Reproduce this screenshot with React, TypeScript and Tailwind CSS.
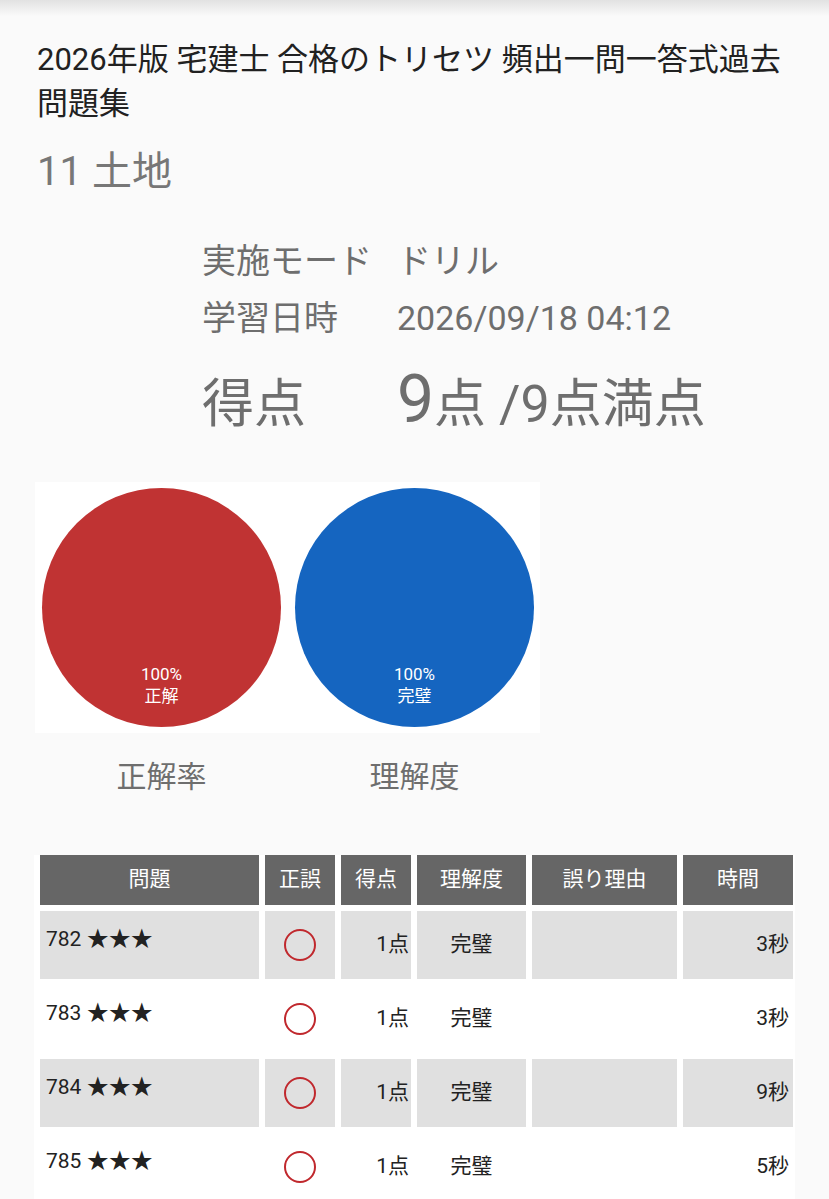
import React from 'react';

const FONT = { fontFamily: 'Roboto, "Noto Sans CJK JP", sans-serif' };

type Row = { id: number; score: string; level: string; reason: string; time: string };

const rows: Row[] = [
  { id: 782, score: '1点', level: '完璧', reason: '', time: '3秒' },
  { id: 783, score: '1点', level: '完璧', reason: '', time: '3秒' },
  { id: 784, score: '1点', level: '完璧', reason: '', time: '9秒' },
  { id: 785, score: '1点', level: '完璧', reason: '', time: '5秒' },
];

const headers = ['問題', '正誤', '得点', '理解度', '誤り理由', '時間'];

function Pie({ color, label }: { color: string; label: string }) {
  return (
    <div className={`w-[239px] h-[239px] rounded-full ${color} flex flex-col items-center justify-end pb-[20px] text-white text-[17px] leading-[22px]`}>
      <span>100%</span>
      <span>{label}</span>
    </div>
  );
}

function Ring() {
  return <div className="w-[32px] h-[32px] rounded-full border-2 border-[#c0282d]" />;
}

export default function App() {
  return (
    <div className="min-h-screen bg-[#fafafa] text-[#222]" style={FONT}>
      <div className="h-[16px] bg-gradient-to-b from-[#e2e2e2] to-[#fafafa]" />

      <div className="px-[37px]">
        <h1 className="mt-[22px] text-[31px] leading-[44px] font-normal text-[#212121]">
          2026年版 宅建士 合格のトリセツ 頻出一問一答式過去問題集
        </h1>
        <div className="mt-[22px] text-[40px] leading-[48px] text-[#777]">11 土地</div>
      </div>

      <div className="pl-[202px] mt-[37px] text-[#6e6e6e]">
        <div className="flex text-[34px] leading-[57px]">
          <span className="w-[195px]">実施モード</span>
          <span>ドリル</span>
        </div>
        <div className="flex text-[34px] leading-[57px]">
          <span className="w-[195px]">学習日時</span>
          <span>2026/09/18 04:12</span>
        </div>
        <div className="flex items-baseline mt-[18px] leading-[70px]">
          <span className="w-[195px] text-[52px]">得点</span>
          <span className="text-[66px]">9</span>
          <span className="text-[52px]">点 /9点満点</span>
        </div>
      </div>

      <div className="ml-[35px] mt-[42px] w-[505px] h-[251px] bg-white flex gap-[14px] pt-[6px] pl-[7px]">
        <Pie color="bg-[#c03333]" label="正解" />
        <Pie color="bg-[#1565c0]" label="完璧" />
      </div>

      <div className="ml-[42px] mt-[24px] flex gap-[14px] text-[30px] leading-[40px] text-[#6e6e6e]">
        <div className="w-[239px] text-center">正解率</div>
        <div className="w-[239px] text-center">理解度</div>
      </div>

      <div className="ml-[34px] mt-[58px] w-[761px] bg-white pl-[6px]">
        <div className="grid grid-cols-[219px_70px_70px_109px_145px_110px] gap-[6px] text-[21px]">
          {headers.map((h) => (
            <div key={h} className="h-[50px] bg-[#666] text-white text-[21px] flex items-center justify-center">
              {h}
            </div>
          ))}
          {rows.map((r, i) => {
            const bg = i % 2 === 0 ? 'bg-[#e0e0e0]' : 'bg-white';
            return (
              <React.Fragment key={r.id}>
                <div className={`h-[68px] ${bg} pl-[6px] pt-[14px] leading-[28px] text-[#222]`}>
                  {r.id} <span className="text-[22px]">★★★</span>
                </div>
                <div className={`h-[68px] ${bg} flex items-center justify-center`}>
                  <Ring />
                </div>
                <div className={`h-[68px] ${bg} flex items-center justify-end pr-[2px] text-[#222]`}>{r.score}</div>
                <div className={`h-[68px] ${bg} flex items-center justify-center text-[#222]`}>{r.level}</div>
                <div className={`h-[68px] ${bg} flex items-center`}>{r.reason}</div>
                <div className={`h-[68px] ${bg} flex items-center justify-end pr-[4px] text-[#222]`}>{r.time}</div>
              </React.Fragment>
            );
          })}
        </div>
      </div>
    </div>
  );
}
